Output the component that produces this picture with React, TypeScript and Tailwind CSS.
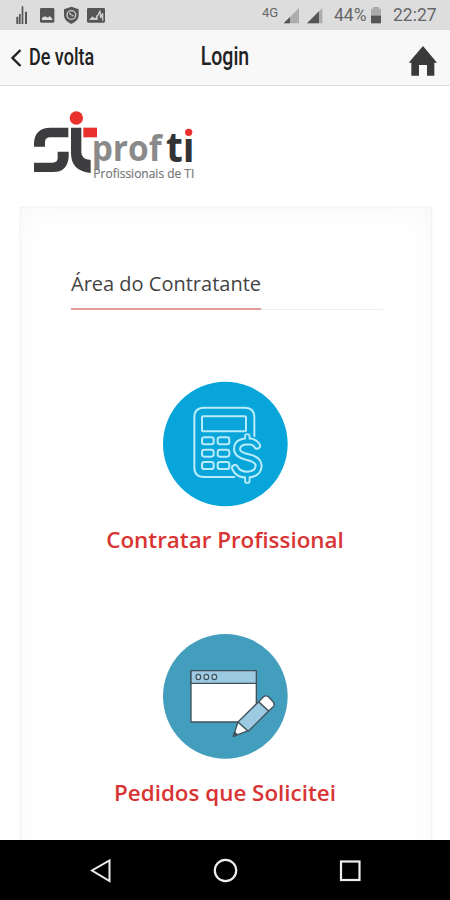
import type { ReactNode } from "react";

function StatusBar() {
    return (
        <div className="flex h-[30px] shrink-0 items-center justify-between bg-[#dddddd] pl-4 pr-3">
            <svg width="94" height="30" viewBox="48 0 282 90" fill="#555">
                <path d="M49 50h6v22h-6zM57 42h5v30h-5zM65 19h5v53h-5zM75 35h6v37h-6z" />
                <rect x="120" y="24" width="43" height="44" rx="4" />
                <path d="M126 60v-7l9-4 9 4 5-5 8 8v4z" fill="#ddd" />
                <path d="M214 20l22 8v18q0 17-22 26q-22-9-22-26V28z" />
                <circle cx="214" cy="45" r="13" fill="none" stroke="#ccc" strokeWidth="4" />
                <path d="M208 39l6 6M215 49l5-4" fill="none" stroke="#ccc" strokeWidth="4" />
                <rect x="261" y="24" width="54" height="44" rx="4" />
                <path d="M267 60l10-11 8 6 8-9v14z" fill="#ccc" />
                <path d="M288 50l6-4 6-14 2 22 6-14v22" fill="none" stroke="#ccc" strokeWidth="4" />
            </svg>
            <div className="flex h-[30px] w-[176px] items-center font-['Roboto',sans-serif] text-[#666]">
                <span className="mb-[5px] w-[20px] whitespace-nowrap text-[13px] leading-none">4G</span>
                <svg width="42" height="30" viewBox="165 0 126 90">
                    <path d="M216 24v46h-46z" fill="#adadad" />
                    <path d="M189 51v19h-19z" fill="#555" />
                    <path d="M286 24v46h-46z" fill="#adadad" />
                    <path d="M276 34v36h-36z" fill="#555" />
                </svg>
                <span className="ml-[10px] mt-[2px] w-[34px] whitespace-nowrap text-[17.5px] leading-none">44%</span>
                <svg className="ml-[2px]" width="12" height="30" viewBox="435 0 36 90">
                    <path d="M438 26h6v-5h18v5h6v22h-30z" fill="#aaa" />
                    <path d="M438 47h30v23h-30z" fill="#555" />
                </svg>
                <span className="ml-[11px] mt-[2px] whitespace-nowrap text-[17.5px] leading-none">22:27</span>
            </div>
        </div>
    );
}

function Header() {
    return (
        <div className="grid h-14 shrink-0 grid-cols-3 items-center border-b border-[#dedede] bg-[#f8f8f8] font-['Roboto',sans-serif] font-medium text-[#222]">
            <div className="flex items-center pl-[10px]">
                <svg width="12" height="20" viewBox="0 0 12 20" fill="none" stroke="#222" strokeWidth="2.4">
                    <path d="M10.5 2L2.5 10L10.5 18" />
                </svg>
                <span className="mb-px ml-[7px] w-16 origin-left scale-x-[0.75] whitespace-nowrap text-[24px] leading-none">
                    De volta
                </span>
            </div>
            <span className="mb-[3px] origin-center scale-x-[0.75] text-center text-[26px] leading-none">Login</span>
            <svg className="ml-auto mr-[12px] mt-[6px]" width="30" height="32" viewBox="550 135 90 96" fill="#3a3a3a">
                <path d="M595 138L637 188H629V227H607V195H583V227H560V188H552Z" />
            </svg>
        </div>
    );
}

function Logo() {
    return (
        <svg className="ml-5 mt-[14px] shrink-0" width="190" height="90" viewBox="0 0 570 270">
            <g fill="#3d3d40">
                <path d="M145 83V112H91Q75 112 75 126V140H42V130Q44 83 91 83Z" />
                <path d="M113 155H146V170Q143 216 99 216H42V188H97Q113 188 113 174Z" />
                <path d="M153 83H184V157Q184 178 212 180V219Q153 214 153 160Z" />
            </g>
            <path d="M190 83H231V112H190Z" fill="#e8302d" />
            <circle cx="169" cy="54" r="20" fill="#e8302d" />
            <g fontFamily="'Open Sans', sans-serif">
                <text x="215" y="184" fontSize="108" fontWeight="700" fill="#8a8a8a" textLength="210" lengthAdjust="spacingAndGlyphs">
                    prof
                </text>
                <text x="438" y="186" fontSize="122" fontWeight="700" fill="#333335" textLength="86" lengthAdjust="spacingAndGlyphs">
                    tı
                </text>
                <text x="220" y="235" fontSize="38" fill="#777" stroke="#777" strokeWidth="0.6" textLength="303" lengthAdjust="spacingAndGlyphs">
                    Profissionais de TI
                </text>
            </g>
            <circle cx="506" cy="97" r="11" fill="#e8302d" />
        </svg>
    );
}

function CalculatorIcon() {
    const dollar =
        "M306 212Q299 199 277 199Q246 201 246 222Q246 239 277 246Q311 253 311 273Q309 297 277 299Q249 299 240 279";
    return (
        <svg width="140" height="140" viewBox="0 0 420 420" fill="none" strokeLinecap="round" strokeLinejoin="round">
            <circle cx="211" cy="207" r="187" fill="#08a5da" />
            <g stroke="#b9ecfb" strokeWidth="6">
                <path d="M298 184V127Q298 98 269 98H147Q118 98 118 127V277Q118 306 147 306H238" />
                <rect x="141" y="124" width="132" height="45" rx="3" />
                {[187, 224, 261].map((y) => (
                    <g key={y}>
                        <rect x="141" y={y} width="35" height="21" rx="7" />
                        <rect x="188" y={y} width="35" height="21" rx="7" />
                    </g>
                ))}
            </g>
            {/* outlined dollar sign */}
            <path d={dollar} stroke="#b9ecfb" strokeWidth="24" />
            <path d="M277 184V199M277 300V317" stroke="#b9ecfb" strokeWidth="19" />
            <path d={dollar} stroke="#08a5da" strokeWidth="12" />
            <path d="M277 184V199M277 300V317" stroke="#08a5da" strokeWidth="8" />
        </svg>
    );
}

function BrowserEditIcon() {
    return (
        <svg width="140" height="140" viewBox="0 0 420 420" stroke="#41515c" strokeWidth="4" strokeLinejoin="round">
            <circle cx="211" cy="205" r="187" fill="#439dbd" stroke="none" />
            <rect x="108" y="128" width="196" height="154" fill="#fff" />
            <rect x="108" y="128" width="196" height="38" fill="#9dcae3" />
            {[130, 154, 178].map((x) => (
                <ellipse key={x} cx={x} cy="147" rx="7" ry="8" fill="#b5d7e8" strokeWidth="3.5" />
            ))}
            <path d="M249 282L235 325L280 308Z" fill="#fff" />
            <path d="M235 325L239 313L247 320Z" fill="#41515c" />
            <path d="M249 282L311 221L341 249L280 310Z" fill="#9dcae3" />
            <path d="M311 221L325 207Q333 200 341 207L355 222Q361 230 354 237L341 249Z" fill="#fff" />
        </svg>
    );
}

function Option({ icon, label }: { icon: ReactNode; label: string }) {
    return (
        <div className="flex h-[253px] flex-col items-center">
            {icon}
            <span className="mt-[9px] whitespace-nowrap text-[22.4px] font-semibold leading-8 text-[#d93434]">{label}</span>
        </div>
    );
}

function NavBar() {
    return (
        <div className="flex h-[60px] shrink-0 items-center justify-between bg-black px-[88px]">
            <svg width="26" height="26" viewBox="0 0 26 26" fill="none" stroke="#eee" strokeWidth="2">
                <path d="M21.5 3.5V24L4 13.5Z" />
            </svg>
            <svg width="26" height="26" viewBox="0 0 26 26" fill="none" stroke="#eee" strokeWidth="2.2">
                <circle cx="13.5" cy="13.5" r="10.7" />
            </svg>
            <svg width="26" height="26" viewBox="0 0 26 26" fill="none" stroke="#eee" strokeWidth="2.2">
                <rect x="5" y="4.5" width="18.5" height="18.5" />
            </svg>
        </div>
    );
}

export default function App() {
    return (
        <div className="flex h-[900px] w-[450px] flex-col overflow-hidden bg-white font-['Open_Sans',sans-serif]">
            <StatusBar />
            <Header />
            <div className="flex min-h-0 flex-1 flex-col overflow-hidden">
                <Logo />
                <div className="ml-5 mt-[17px] h-[700px] w-[412px] shrink-0 border border-[#f3f3f3] bg-white pl-[50px] pr-[48px] pt-[60px] shadow-[inset_0_0_30px_#f7f7f7,0_0_3px_#f3f3f3]">
                    <div className="flex border-b border-[#eeeeee]">
                        <h2 className="-mb-px h-[42px] w-[190px] whitespace-nowrap border-b-2 border-[#e59b9b] text-[20px] leading-8 text-[#444]">
                            Área do Contratante
                        </h2>
                    </div>
                    <div className="pr-1 pt-[65px]">
                        <Option icon={<CalculatorIcon />} label="Contratar Profissional" />
                        <Option icon={<BrowserEditIcon />} label="Pedidos que Solicitei" />
                    </div>
                </div>
            </div>
            <NavBar />
        </div>
    );
}
